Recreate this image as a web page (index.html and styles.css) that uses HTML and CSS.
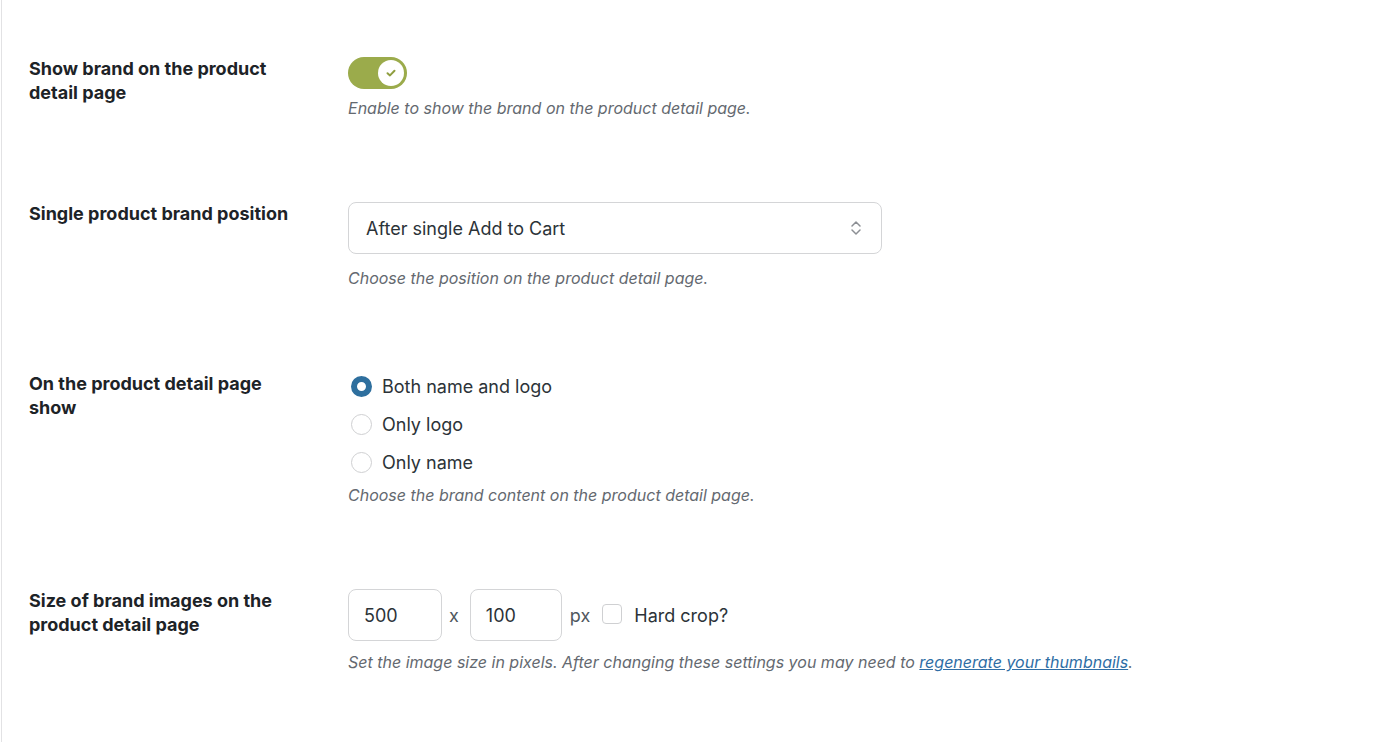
FILE: index.html
```html
<!DOCTYPE html>
<html lang="en">
<head>
<meta charset="utf-8">
<title>Brand settings</title>
<link rel="stylesheet" href="styles.css">
</head>
<body>
<div class="page">
  <div class="field">
    <div class="label">Show brand on the product detail page</div>
    <div class="control">
      <span class="toggle">
        <span class="knob">
          <svg width="12" height="10" viewBox="0 0 12 10"><path d="M2.5 5.2 L5 7.4 L9.5 2.8" fill="none" stroke="#8f9e3f" stroke-width="2" stroke-linecap="round" stroke-linejoin="round"/></svg>
        </span>
      </span>
      <p class="desc d-toggle">Enable to show the brand on the product detail page.</p>
    </div>
  </div>

  <div class="field">
    <div class="label">Single product brand position</div>
    <div class="control">
      <div class="select">
        <span>After single Add to Cart</span>
        <svg class="chev" width="14" height="20" viewBox="0 0 14 20"><path d="M3 8 L7 4 L11 8" fill="none" stroke="#8c8f94" stroke-width="1.5" stroke-linecap="round" stroke-linejoin="round"/><path d="M3 12 L7 16 L11 12" fill="none" stroke="#8c8f94" stroke-width="1.5" stroke-linecap="round" stroke-linejoin="round"/></svg>
      </div>
      <p class="desc d-select">Choose the position on the product detail page.</p>
    </div>
  </div>

  <div class="field">
    <div class="label">On the product detail page show</div>
    <div class="control">
      <div class="radios">
        <div class="radio-row"><span class="radio checked"></span><span>Both name and logo</span></div>
        <div class="radio-row"><span class="radio"></span><span>Only logo</span></div>
        <div class="radio-row"><span class="radio"></span><span>Only name</span></div>
      </div>
      <p class="desc d-radio">Choose the brand content on the product detail page.</p>
    </div>
  </div>

  <div class="field">
    <div class="label">Size of brand images on the product detail page</div>
    <div class="control">
      <div class="size-row">
        <span class="num w1">500</span>
        <span class="sep">x</span>
        <span class="num w2">100</span>
        <span class="unit">px</span>
        <span class="checkbox"></span>
        <span class="cb-label">Hard crop?</span>
      </div>
      <p class="desc d-size">Set the image size in pixels. After changing these settings you may need to <a href="#">regenerate your thumbnails</a>.</p>
    </div>
  </div>
</div>
</body>
</html>
```

FILE: styles.css
```css
html, body {
  margin: 0;
  padding: 0;
  background: #ffffff;
}

body {
  font-family: Inter, "Noto Sans", "Liberation Sans", sans-serif;
  color: #1d2327;
}

.page {
  margin-left: 1px;
  border-left: 1px solid #e2e2e4;
  min-height: 742px;
  box-sizing: border-box;
  padding: 57px 0 0 27px;
}

.field {
  display: grid;
  grid-template-columns: 280px 1fr;
  column-gap: 39px;
  margin-bottom: 82px;
}

.label {
  font-size: 18px;
  font-weight: 650;
  line-height: 24px;
  color: #1d2327;
}

.control {
  font-size: 18px;
  color: #2c3338;
}

.desc {
  margin: 0;
  font-size: 16px;
  line-height: 24px;
  font-style: italic;
  color: #646970;
}

.d-toggle { margin-top: 7px; }
.d-select { margin-top: 12px; }
.d-radio { margin-top: 7px; }
.d-size { margin-top: 9px; }

.desc a {
  color: #2f6ea5;
  text-decoration: underline;
}

/* toggle */
.toggle {
  display: flex;
  align-items: center;
  justify-content: flex-end;
  width: 59px;
  height: 32px;
  border-radius: 16px;
  background: #9bab4b;
  box-sizing: border-box;
  padding-right: 3px;
}

.knob {
  width: 26px;
  height: 26px;
  border-radius: 50%;
  background: #ffffff;
  display: flex;
  align-items: center;
  justify-content: center;
}

/* select */
.select {
  width: 534px;
  height: 52px;
  box-sizing: border-box;
  border: 1px solid #d4d5d7;
  border-radius: 8px;
  display: flex;
  align-items: center;
  justify-content: space-between;
  padding: 0 18px 0 17px;
  color: #2c3338;
}

.chev {
  display: block;
}

/* radios */
.radios {
  display: flex;
  flex-direction: column;
  gap: 10px;
}

.radio-row {
  display: flex;
  align-items: center;
  height: 28px;
  gap: 10px;
  padding-left: 3px;
}

.radio {
  width: 21px;
  height: 21px;
  box-sizing: border-box;
  border-radius: 50%;
  border: 1px solid #cfd0d2;
  background: #fff;
  flex: none;
}

.radio.checked {
  border: 6px solid #2e6f9e;
}

/* size row */
.size-row {
  display: flex;
  align-items: center;
  height: 52px;
}

.num {
  height: 52px;
  box-sizing: border-box;
  border: 1px solid #d4d5d7;
  border-radius: 8px;
  display: flex;
  align-items: center;
  padding-left: 15px;
  color: #2c3338;
}

.w1 { width: 94px; }
.w2 { width: 92px; }

.sep {
  margin: 0 11px 0 7px;
  color: #50575e;
}

.unit {
  margin-left: 8px;
  color: #50575e;
}

.checkbox {
  width: 20px;
  height: 20px;
  box-sizing: border-box;
  border: 1px solid #cfd0d2;
  border-radius: 4px;
  margin-left: 12px;
  margin-top: -2px;
}

.cb-label {
  margin-left: 12px;
  color: #2c3338;
}
```
